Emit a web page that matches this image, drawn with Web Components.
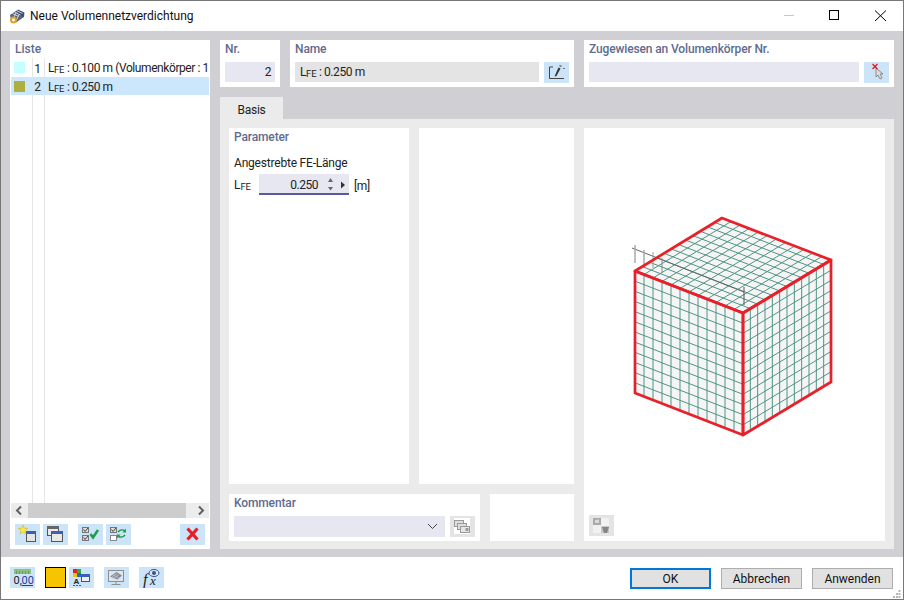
<!DOCTYPE html>
<html lang="de"><head><meta charset="utf-8"><title>Neue Volumennetzverdichtung</title>
<style>
html,body{margin:0;padding:0;background:#fff}
body{font:12px/16px Roboto,sans-serif;color:#1a1a1a}
</style></head><body>
<dlg-window></dlg-window>

<template id="t-window">
<style>
:host{display:flex;flex-direction:column;width:904px;height:600px;box-sizing:border-box;border:1px solid #777;background:#fff;overflow:hidden}
.main{flex:1;display:flex;gap:10px;padding:9px 9px 8px;background:#d0d0d4;min-height:0}
.right{flex:1;display:flex;flex-direction:column;min-width:0}
.top{display:flex;gap:10px;height:47px;margin-bottom:10px}
.row{display:flex;gap:5px}
.grow{flex:1}
</style>
<dlg-titlebar>Neue Volumennetzverdichtung</dlg-titlebar>
<div class="main">
  <dlg-list></dlg-list>
  <div class="right">
    <div class="top">
      <dlg-panel heading="Nr." style="width:60px"><dlg-field align="right">2</dlg-field></dlg-panel>
      <dlg-panel heading="Name" style="width:284px"><div class="row"><dlg-field class="grow" tone="gray"><dlg-lfe></dlg-lfe> : 0.250 m</dlg-field><dlg-btn icon="edit"></dlg-btn></div></dlg-panel>
      <dlg-panel heading="Zugewiesen an Volumenkörper Nr." style="width:310px"><div class="row"><dlg-field class="grow"></dlg-field><dlg-btn icon="pick"></dlg-btn></div></dlg-panel>
    </div>
    <dlg-tabs label="Basis"></dlg-tabs>
  </div>
</div>
<dlg-footer></dlg-footer>
</template>

<template id="t-titlebar">
<style>
:host{display:flex;align-items:center;height:30px;flex:none;background:#fff}
.ico{margin-left:8px;margin-right:5px;display:block}
.t{flex:1;font-size:12px;color:#111;white-space:nowrap}
.c{display:block}
</style>
<svg class="ico" width="16" height="16" viewBox="0 0 16 16"><path d="M1 7 9 1.500 15.500 4.500 15 9 7 14.500 2 12Z" fill="#56657f"/><path d="M9 2 15 5 14.500 9 8.500 6Z" fill="#3c4a63"/><path d="M7.500 2.500 13.500 5.500M5.500 4 11.500 7M3.500 5.500 9.500 8.500M7 5 4.500 10M10 6.500 7.500 12" stroke="#ccd3df" stroke-width="1"/><circle cx="4.500" cy="12" r="3.500" fill="#d9a528"/><circle cx="4.500" cy="12" r="1.400" fill="#fff"/></svg>
<span class="t"><slot></slot></span>
<svg class="c" width="120" height="30" viewBox="0 0 120 30"><path d="M1 14.500H11" stroke="#c8c8c8"/><rect x="46.500" y="9.500" width="9" height="9" fill="none" stroke="#000"/><path d="M92 9.500 103 20M103 9.500 92 20" stroke="#000" fill="none"/></svg>
</template>

<template id="t-panel">
<style>
:host{display:block;box-sizing:border-box;background:#fff;padding:1px 5px 0;min-width:0}
h3{margin:0 0 5px;font:500 12px/16px Roboto,sans-serif;letter-spacing:-.13px;color:#5f6b8f;white-space:nowrap;height:16px}
</style>
<h3></h3><slot></slot>
</template>

<template id="t-field">
<style>
:host{display:block;box-sizing:border-box;height:20px;padding:0 4px 0 5px;background:#e6e7f0;font-size:12px;line-height:21px;letter-spacing:-.4px;color:#222;white-space:nowrap;min-width:0}
:host([align=right]){text-align:right}
:host([tone=gray]){background:#e4e4e4}
</style><slot></slot>
</template>

<template id="t-lfe">
<style>:host{display:inline}span{font-size:9.500px;letter-spacing:-.2px;position:relative;top:1px}</style>L<span>FE</span>
</template>

<template id="t-btn">
<style>
:host{display:block;flex:none;width:25px;height:21px;background:#cce4f7}
:host([tone=gray]){background:#e4e4e4}
svg{display:block}
</style><svg width="25" height="21" viewBox="0 0 25 21"></svg>
</template>

<template id="t-list">
<style>
:host{display:flex;flex-direction:column;flex:none;width:200px;box-sizing:border-box;background:#fff}
h3{margin:0;padding:1px 5px;height:16px;font:500 12px/16px Roboto,sans-serif;color:#5f6b8f}
.body{flex:1;background:linear-gradient(#e6e6e6,#e6e6e6) 22px 0/1px 100% no-repeat,linear-gradient(#e6e6e6,#e6e6e6) 34px 0/1px 100% no-repeat;min-height:0}
.sb{display:flex;align-items:center;justify-content:space-between;height:15px;margin:0 1px;background:linear-gradient(#cdcdcd,#cdcdcd) 17px 0/158px 100% no-repeat,#ececec}
.sb svg{display:block}
.tools{display:flex;height:21px;padding:6px 5px 4px}
</style>
<h3>Liste</h3>
<div class="body">
  <dlg-row n="1" swatch="#c4ffff" style="height:19px"><dlg-lfe></dlg-lfe> : 0.100 m (Volumenkörper : 1</dlg-row>
  <dlg-row n="2" swatch="#aeae3e" selected style="height:18px"><dlg-lfe></dlg-lfe> : 0.250 m</dlg-row>
</div>
<div class="sb">
  <svg width="17" height="15" viewBox="0 0 17 15"><path d="M10 3.500 6 7.500 10 11.500" fill="none" stroke="#606060" stroke-width="2"/></svg>
  <svg width="17" height="15" viewBox="0 0 17 15"><path d="M7 3.500 11 7.500 7 11.500" fill="none" stroke="#606060" stroke-width="2"/></svg>
</div>
<div class="tools">
  <dlg-btn icon="new"></dlg-btn>
  <dlg-btn icon="copy" style="margin-left:3px"></dlg-btn>
  <dlg-btn icon="checkall" style="margin-left:10px"></dlg-btn>
  <dlg-btn icon="checkswap" style="margin-left:3px"></dlg-btn>
  <dlg-btn icon="del" style="margin-left:49px"></dlg-btn>
</div>
</template>

<template id="t-row">
<style>
:host{display:flex;align-items:center;margin:0 1px;font-size:12px;white-space:nowrap;overflow:hidden;color:#222}
:host([selected]){background:#cce6fb}
i{display:block;flex:none;width:11px;height:11px;margin-left:3px}
b{font-weight:400;flex:none;width:16px;text-align:right;margin-top:2px}
.t{margin-left:7px;margin-top:2px;letter-spacing:-.42px}
</style><i></i><b></b><span class="t"><slot></slot></span>
</template>

<template id="t-tabs">
<style>
:host{display:flex;flex-direction:column;flex:1;min-height:0}
.tab{width:63px;height:22px;background:#ebebeb;text-align:center;font-size:12px;line-height:27px;letter-spacing:-.3px;color:#222}
.body{flex:1;display:flex;gap:10px;padding:9px 9px 8px;background:#ebebeb;min-height:0}
.left{width:345px;display:flex;flex-direction:column;gap:10px}
.up{flex:1;display:flex;gap:10px;min-height:0}
.down{height:47px;display:flex;gap:10px}
.blank{background:#fff}
.param{width:180px}
.lab{margin:10px 0 3px;font-size:12px;line-height:16px;letter-spacing:-.2px;color:#222;white-space:nowrap}
.line{display:flex;align-items:center;font-size:12px;color:#222}
.line .sym{width:25px;padding-top:2px;line-height:16px}
.unit{margin-left:5px;letter-spacing:-.4px;padding-top:2px;line-height:16px}
.com{display:flex;gap:5px}
.sel{flex:1;height:21px;background:#e6e7f0;display:flex;justify-content:flex-end;align-items:center}
</style>
<div class="tab"></div>
<div class="body">
  <div class="left">
    <div class="up">
      <dlg-panel class="param" heading="Parameter">
        <div class="lab">Angestrebte FE-Länge</div>
        <div class="line"><span class="sym"><dlg-lfe></dlg-lfe></span><dlg-spin>0.250</dlg-spin><span class="unit">[m]</span></div>
      </dlg-panel>
      <div class="blank" style="flex:1"></div>
    </div>
    <div class="down">
      <dlg-panel heading="Kommentar" style="width:251px">
        <div class="com"><div class="sel"><svg width="20" height="21" viewBox="0 0 20 21"><path d="M3 8 7.500 12.500 12 8" fill="none" stroke="#444"/></svg></div><dlg-btn icon="stack" tone="gray"></dlg-btn></div>
      </dlg-panel>
      <div class="blank" style="flex:1"></div>
    </div>
  </div>
  <dlg-preview></dlg-preview>
</div>
</template>

<template id="t-spin">
<style>
:host{display:flex;align-items:center;justify-content:flex-end;box-sizing:border-box;width:90px;height:21px;background:#e6e7f0;border-bottom:2px solid #5a5a9a;font-size:12px;letter-spacing:-.5px;color:#222}
span{padding-top:2px;line-height:16px}
svg{display:block;margin-left:5px}
</style>
<span><slot></slot></span><svg width="26" height="19" viewBox="0 0 26 19"><path d="M5 8 7.500 4 10 8Z" fill="#666"/><path d="M5 13 7.500 16.500 10 13Z" fill="#666"/><path d="M18 7.500 22 11 18 14.500Z" fill="#333"/></svg>
</template>

<template id="t-preview">
<style>
:host{display:block;position:relative;width:301px;background:#fff}
svg.c{display:block}
dlg-btn{position:absolute;left:5px;bottom:5px}
</style>
<svg class="c" width="301" height="413" viewBox="584 128 301 413"></svg>
<dlg-btn icon="views" tone="gray"></dlg-btn>
</template>

<template id="t-footer">
<style>
:host{display:flex;align-items:flex-start;flex:none;height:42px;box-sizing:border-box;padding:10px 10px 0 9px;background:#fff;position:relative}
.sp{flex:1}
.y{box-sizing:border-box;width:21px;height:21px;background:#f6c500;border:1px solid #000;margin-left:10px;margin-right:3px}
.grip{position:absolute;right:2px;bottom:1px;display:block}
</style>
<dlg-btn icon="units"></dlg-btn>
<div class="y"></div>
<dlg-btn icon="colors"></dlg-btn>
<dlg-btn icon="screen" style="margin-left:10px"></dlg-btn>
<dlg-btn icon="fx" style="margin-left:10px"></dlg-btn>
<div class="sp"></div>
<dlg-action primary>OK</dlg-action>
<dlg-action style="margin-left:10px">Abbrechen</dlg-action>
<dlg-action style="margin-left:10px">Anwenden</dlg-action>
<svg class="grip" width="8" height="8" viewBox="0 0 8 8" fill="#b8b8b8"><rect x="5.500" y="0" width="2" height="2"/><rect x="3" y="3" width="2" height="2"/><rect x="5.500" y="3" width="2" height="2"/><rect x="0" y="6" width="2" height="2"/><rect x="3" y="6" width="2" height="2"/><rect x="5.500" y="6" width="2" height="2"/></svg>
</template>

<template id="t-action">
<style>
:host{display:flex;align-items:center;justify-content:center;box-sizing:border-box;width:81px;height:21px;margin-top:1px;background:#e1e1e1;border:1px solid #adadad;font-size:12px;color:#111}
:host([primary]){border:2px solid #0078d7}
</style><slot></slot>
</template>

<script>
const ICONS={
 new:'<rect x="11.500" y="7.500" width="9" height="10" fill="#e4e4e4" stroke="#555"/><rect x="11" y="7" width="10" height="3" fill="#3b5fb5"/><path d="M8 1 9.300 4.300 12.800 4.300 10 6.500 11 10 8 8 5 10 6 6.500 3.200 4.300 6.700 4.300Z" fill="#ffe93b" stroke="#c9b000" stroke-width=".5"/>',
 copy:'<rect x="4.500" y="2.500" width="11" height="9" fill="#e8e8e8" stroke="#555"/><rect x="4" y="2" width="12" height="3" fill="#666"/><rect x="8.500" y="7.500" width="11" height="10" fill="#e8e8e8" stroke="#555"/><rect x="8" y="7" width="12" height="3" fill="#3b5fb5"/>',
 checkall:'<rect x="4.500" y="3.500" width="6" height="5" fill="#ddd" stroke="#777"/><path d="M5.500 5.500 7 7.500 10 4" fill="none" stroke="#444"/><rect x="4.500" y="11.500" width="6" height="5" fill="#ddd" stroke="#777"/><path d="M5.500 13.500 7 15.500 10 12" fill="none" stroke="#444"/><path d="M12.500 10 15 13.500 20 6" fill="none" stroke="#1e9e4a" stroke-width="2.500"/>',
 checkswap:'<rect x="4.500" y="3.500" width="6" height="5" fill="#ddd" stroke="#777"/><path d="M5.500 5.500 7 7.500 10 4" fill="none" stroke="#444"/><rect x="4.500" y="11.500" width="6" height="5" fill="#fff" stroke="#888"/><path d="M12 8C14 5.500 17 5.500 19 7M19 11C17 13.500 14 13.500 12 12" fill="none" stroke="#1e9e4a" stroke-width="1.600"/><path d="M20 4.500V8.500H16.500Z M11 14.500V10.500H14.500Z" fill="#1e9e4a"/>',
 del:'<path d="M7.500 4.500 17.500 15.500M17.500 4.500 7.500 15.500" stroke="#ef1b24" stroke-width="3.200" fill="none"/>',
 edit:'<path d="M9 5H5.500V16.500H9" fill="none" stroke="#444"/><path d="M9 16.500H20" stroke="#444"/><path d="M10.500 14.500 14.500 5.500 16.500 6.500 12.500 14Z" fill="#333"/><path d="M15.500 3.500 17.500 4.500" stroke="#777" stroke-width="1.500"/><path d="M19 6.500H21" stroke="#777"/>',
 pick:'<path d="M12 6V15L14 13 16 17 18 16 16.200 12H19Z" fill="#ddd" stroke="#777" stroke-width=".8"/><path d="M8.500 2 13.500 7M13.500 2 8.500 7" stroke="#ef1b24" stroke-width="1.300"/><rect x="10" y="3.500" width="2" height="2" fill="#ef1b24"/>',
 stack:'<rect x="4" y="2" width="16" height="16" fill="#fff"/><rect x="4.500" y="4.500" width="9" height="6" fill="#ddd" stroke="#9a9a9a"/><rect x="7.500" y="7.500" width="9" height="6" fill="#ddd" stroke="#9a9a9a"/><rect x="10.500" y="10.500" width="9" height="6" fill="#e6e6e6" stroke="#9a9a9a"/><rect x="15.500" y="12" width="3" height="3" fill="#999"/>',
 views:'<rect x="4" y="3" width="16" height="15" fill="#f1f1f1"/><rect x="4" y="3" width="8" height="7" fill="#a9a9a9"/><path d="M6 5 10 4.500 10 8 6 8Z" fill="#d9d9d9"/><rect x="12" y="11" width="8" height="7" fill="#c8c8c8"/><path d="M13 12H20L18 18H15Z" fill="#858585"/>',
 units:'<rect x="4" y="2" width="17" height="5" fill="#8fbf7f"/><path d="M6.500 4V7M9.500 4V7M12.500 4V7M15.500 4V7M18.500 4V7" stroke="#5f9f5f"/><text x="3.500" y="16.500" font-family="Roboto,sans-serif" font-size="11" fill="#222">0,</text><text x="11.500" y="16.500" font-family="Roboto,sans-serif" font-size="11" fill="#1f3f9f">00</text><path d="M11.500 18.500H23" stroke="#1f3f9f"/>',
 colors:'<rect x="4" y="2" width="4" height="4" fill="#e02020"/><rect x="8" y="2" width="4" height="4" fill="#30b030"/><rect x="4" y="6" width="4" height="4" fill="#f2c500"/><rect x="8" y="6" width="4" height="4" fill="#2a5fd0"/><text x="4.500" y="17" font-family="Liberation Sans,sans-serif" font-size="8" font-weight="700" fill="#222">A</text><rect x="12.500" y="7.500" width="8" height="7" fill="#eee" stroke="#555"/><rect x="12" y="7" width="9" height="3" fill="#3b5fb5"/><path d="M4 18.500H12" stroke="#555" stroke-dasharray="2 1"/>',
 screen:'<rect x="4.500" y="3.500" width="15" height="11" fill="#dfe3ea" stroke="#8a8f96"/><path d="M12 14.500V17M7.500 17.500H16.500" stroke="#8a8f96"/><path d="M6 9.500 12.500 5 18 8.500 13.500 12.500Z" fill="#7f8da0"/><path d="M8 10 13 6.500M10 11 15 7.500M9 8 15 11" stroke="#c6ccd6" stroke-width=".7"/>',
 fx:'<text x="4" y="18" font-family="Liberation Serif,serif" font-style="italic" font-size="16" fill="#222">f</text><text x="11" y="18" font-family="Liberation Serif,serif" font-style="italic" font-size="13" fill="#222">x</text><ellipse cx="15" cy="6" rx="5" ry="3.500" fill="#dbe7f5" stroke="#34558c"/><circle cx="15" cy="6" r="2" fill="#34558c"/>'
};
const tpl=id=>document.getElementById(id).content.cloneNode(true);
function simple(name,id,setup){
  customElements.define(name,class extends HTMLElement{
    constructor(){super();this.attachShadow({mode:'open'}).appendChild(tpl(id));}
    connectedCallback(){if(setup)setup(this,this.shadowRoot);}
  });
}
simple('dlg-window','t-window');
simple('dlg-titlebar','t-titlebar');
simple('dlg-panel','t-panel',(h,s)=>{s.querySelector('h3').textContent=h.getAttribute('heading')||'';});
simple('dlg-field','t-field');
simple('dlg-lfe','t-lfe');
simple('dlg-btn','t-btn',(h,s)=>{s.querySelector('svg').innerHTML=ICONS[h.getAttribute('icon')]||'';});
simple('dlg-list','t-list');
simple('dlg-row','t-row',(h,s)=>{s.querySelector('i').style.background=h.getAttribute('swatch');s.querySelector('b').textContent=h.getAttribute('n');});
simple('dlg-tabs','t-tabs',(h,s)=>{s.querySelector('.tab').textContent=h.getAttribute('label');});
simple('dlg-spin','t-spin');
simple('dlg-footer','t-footer');
simple('dlg-action','t-action');
simple('dlg-preview','t-preview',(h,s)=>{
  const N=12,edge='#e8202a',grid='#4f9484';
  const A=[722,218],R=[831,260],F=[743,313],L=[635,271],BF=[743,435],BL=[635,393],BR=[831,382];
  const mix=(a,b,t)=>[a[0]+(b[0]-a[0])*t,a[1]+(b[1]-a[1])*t];
  const ln=(a,b,c,w)=>`<line x1="${a[0]}" y1="${a[1]}" x2="${b[0]}" y2="${b[1]}" stroke="${c}" stroke-width="${w}"/>`;
  let o='';
  const face=(p,q,r,t)=>{
    o+=`<polygon points="${[p,q,r,t].map(v=>v.join(',')).join(' ')}" fill="#f5f5f5"/>`;
    for(let i=1;i<N;i++){const u=i/N;
      o+=ln(mix(p,q,u),mix(t,r,u),grid,1);
      o+=ln(mix(p,t,u),mix(q,r,u),grid,1);}
  };
  face(L,A,R,F);face(L,F,BF,BL);face(F,R,BR,BF);
  const dim='#666';
  o+=ln([632,248],[744,292],dim,1);
  [[635,245,263,'#aaa',1.5],[644,250,265,'#aaa',1.5],[653,252,268,'#999',1],[662,258,273,'#888',1],[744,287,305,'#555',1]].forEach(d=>{o+=ln([d[0],d[1]],[d[0],d[2]],d[3],d[4]);});
  const pl=a=>`<polygon points="${a.map(v=>v.join(',')).join(' ')}" fill="none" stroke="${edge}" stroke-width="2.700" stroke-linejoin="round"/>`;
  o+=pl([L,A,R,F])+pl([L,F,BF,BL])+pl([F,R,BR,BF]);
  s.querySelector('svg.c').innerHTML=o;
});
</script>
</body></html>
